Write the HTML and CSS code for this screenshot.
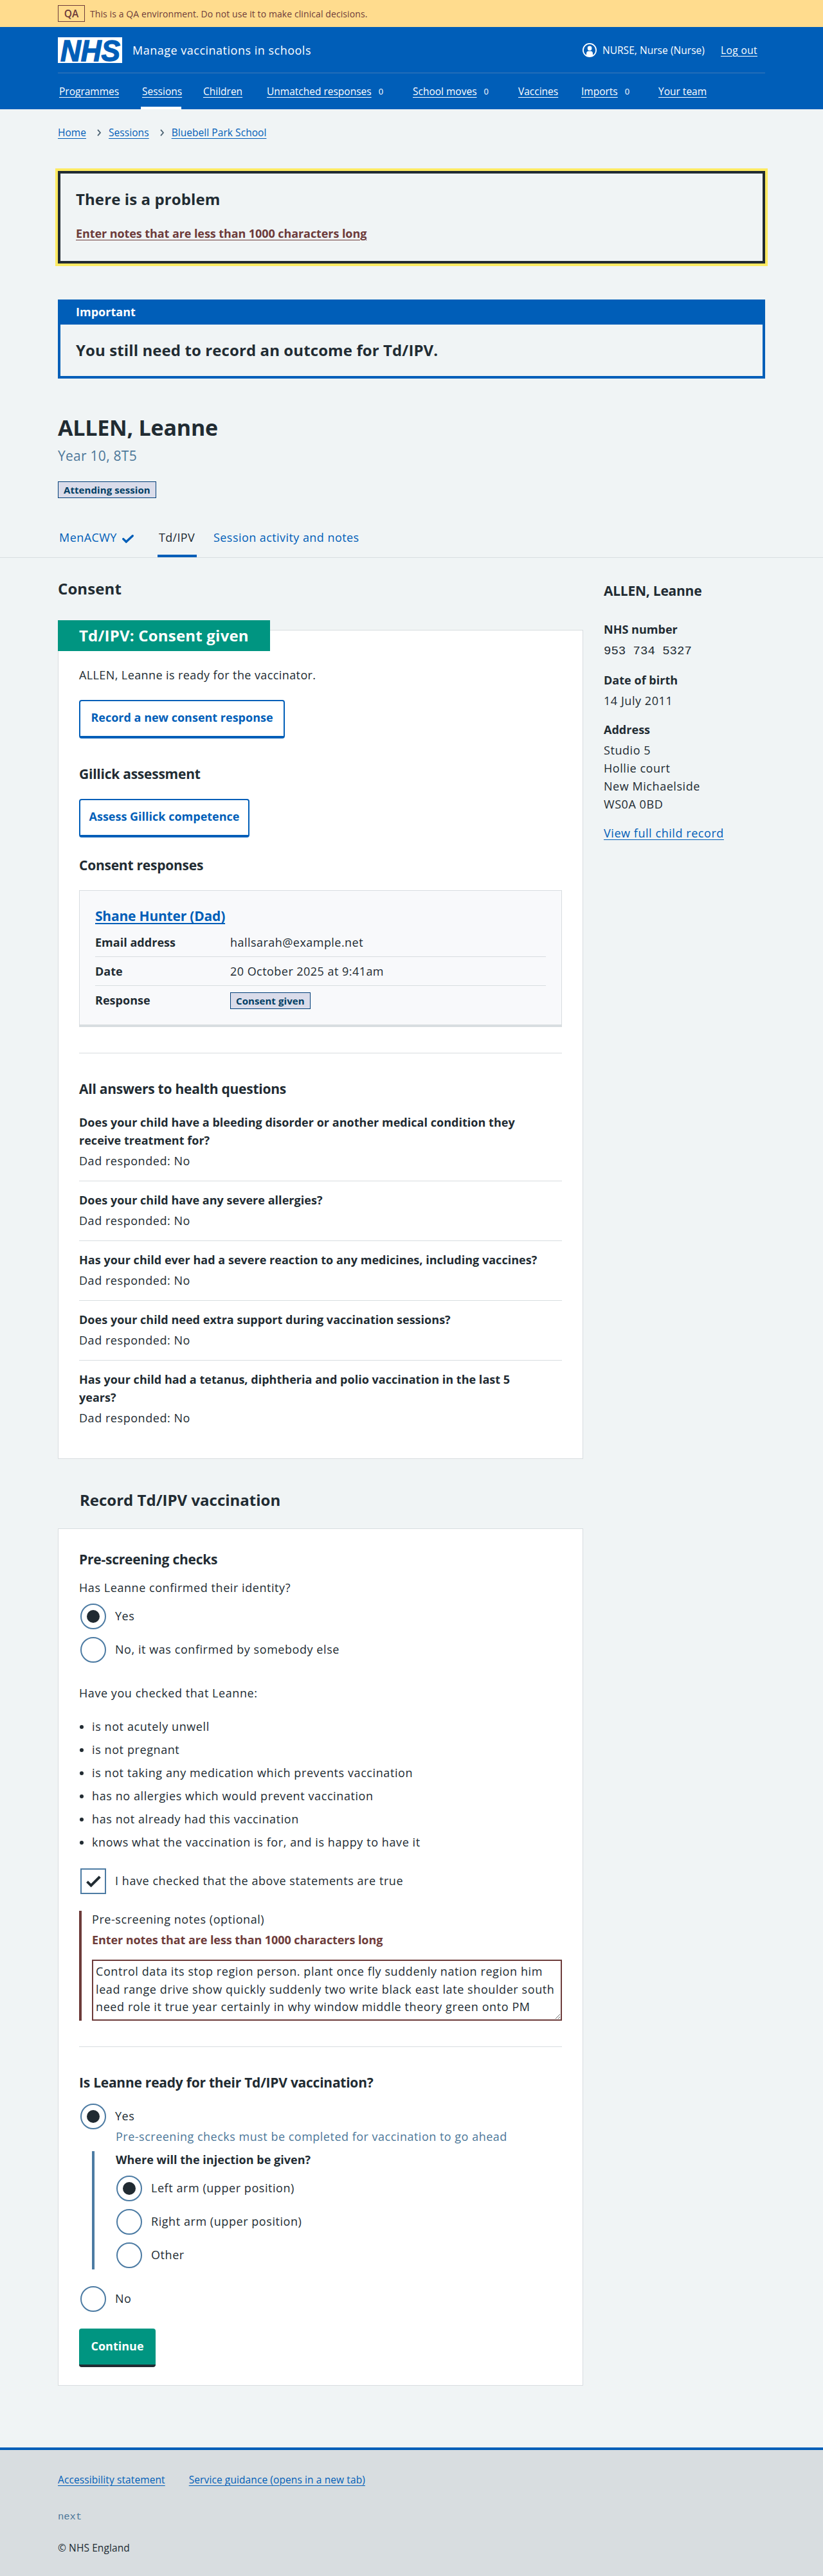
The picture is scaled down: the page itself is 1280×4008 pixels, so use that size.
FILE: index.html
```html
<!DOCTYPE html>
<html lang="en">
<head>
<meta charset="utf-8">
<title>ALLEN, Leanne – Manage vaccinations in schools</title>
<link rel="stylesheet" href="styles.css">
</head>
<body>
<div class="env-banner"><div class="container env-inner"><span class="env-tag">QA</span><span class="env-text">This is a QA environment. Do not use it to make clinical decisions.</span></div></div>
<header class="header">
  <div class="container">
    <div class="header-top">
      <svg class="logo" viewBox="0 0 100 40" role="img" aria-label="NHS"><path fill="#fff" d="M0 0h100v40H0z"/><text x="4" y="36.5" textLength="93" lengthAdjust="spacingAndGlyphs">NHS</text></svg>
      <span class="service">Manage vaccinations in schools</span>
      <div class="account">
        <svg width="22" height="22" viewBox="0 0 22 22"><circle cx="11" cy="11" r="10.1" fill="none" stroke="#fff" stroke-width="1.8"/><rect x="7.8" y="4.6" width="6.6" height="7" rx="3.1" fill="#fff"/><path fill="#fff" d="M6 19.3v-3.1c0-2.3 1.4-3.6 3.4-3.6h3.2c2 0 3.4 1.3 3.4 3.6v3.1A9.6 9.6 0 0 1 11 21a9.6 9.6 0 0 1-5-1.700z"/></svg>
        <span class="user">NURSE, Nurse (Nurse)</span>
        <a href="#">Log out</a>
      </div>
    </div>
    <nav class="nav">
      <div><a href="#">Programmes</a></div>
      <div class="current"><a href="#">Sessions</a></div>
      <div><a href="#">Children</a></div>
      <div><a href="#">Unmatched responses</a><span class="count">0</span></div>
      <div><a href="#">School moves</a><span class="count">0</span></div>
      <div><a href="#">Vaccines</a></div>
      <div><a href="#">Imports</a><span class="count">0</span></div>
      <div><a href="#">Your team</a></div>
    </nav>
  </div>
</header>

<div class="container">
  <nav class="breadcrumb">
    <a href="#">Home</a>
    <svg width="7" height="11" viewBox="0 0 7 11"><path d="M1 .8 5 5.500 1 10.200"/></svg>
    <a href="#">Sessions</a>
    <svg width="7" height="11" viewBox="0 0 7 11"><path d="M1 .8 5 5.500 1 10.200"/></svg>
    <a href="#">Bluebell Park School</a>
  </nav>
  <section class="error-summary">
    <h2 class="heading-m">There is a problem</h2>
    <a class="strong" href="#notes">Enter notes that are less than 1000 characters long</a>
  </section>
  <section class="notice">
    <div class="notice-title strong">Important</div>
    <div class="notice-body"><h2 class="heading-m">You still need to record an outcome for Td/IPV.</h2></div>
  </section>
  <h1 class="heading-l">ALLEN, Leanne</h1>
  <p class="caption">Year 10, 8T5</p>
  <p class="status"><span class="tag">Attending session</span></p>
</div>

<nav class="tabs">
  <div class="container tabs-inner">
    <a href="#">MenACWY<svg width="18" height="13" viewBox="0 0 18 13"><path d="M1.800 6.600 6.300 11 16.200 1.700"/></svg></a>
    <a href="#" class="current">Td/IPV</a>
    <a href="#">Session activity and notes</a>
  </div>
</nav>

<div class="container columns">
  <main class="main">
    <h2 class="heading-m">Consent</h2>
    <section class="card consent">
      <h3 class="heading-m card-label">Td/IPV: Consent given</h3>
      <p class="ready">ALLEN, Leanne is ready for the vaccinator.</p>
      <button class="button secondary record">Record a new consent response</button>
      <h4 class="heading-s gillick">Gillick assessment</h4>
      <button class="button secondary assess">Assess Gillick competence</button>
      <h4 class="heading-s responses">Consent responses</h4>
      <div class="response">
        <h5 class="heading-s"><a href="#">Shane Hunter (Dad)</a></h5>
        <dl>
          <div><dt>Email address</dt><dd>hallsarah@example.net</dd></div>
          <div><dt>Date</dt><dd>20 October 2025 at 9:41am</dd></div>
          <div><dt>Response</dt><dd><span class="tag">Consent given</span></dd></div>
        </dl>
      </div>
      <hr>
      <h4 class="heading-s after-rule">All answers to health questions</h4>
      <dl class="answers">
        <div><dt>Does your child have a bleeding disorder or another medical condition they<br>receive treatment for?</dt><dd>Dad responded: No</dd></div>
        <div><dt>Does your child have any severe allergies?</dt><dd>Dad responded: No</dd></div>
        <div><dt>Has your child ever had a severe reaction to any medicines, including vaccines?</dt><dd>Dad responded: No</dd></div>
        <div><dt>Does your child need extra support during vaccination sessions?</dt><dd>Dad responded: No</dd></div>
        <div><dt>Has your child had a tetanus, diphtheria and polio vaccination in the last 5<br>years?</dt><dd>Dad responded: No</dd></div>
      </dl>
    </section>

    <h2 class="heading-m record-title">Record Td/IPV vaccination</h2>
    <section class="card form">
      <h3 class="heading-s prescreen">Pre-screening checks</h3>
      <p class="legend">Has Leanne confirmed their identity?</p>
      <div class="choices">
        <label class="choice"><span class="radio on"></span>Yes</label>
        <label class="choice"><span class="radio"></span>No, it was confirmed by somebody else</label>
      </div>
      <p class="have-you">Have you checked that Leanne:</p>
      <ul class="bullets">
        <li>is not acutely unwell</li>
        <li>is not pregnant</li>
        <li>is not taking any medication which prevents vaccination</li>
        <li>has no allergies which would prevent vaccination</li>
        <li>has not already had this vaccination</li>
        <li>knows what the vaccination is for, and is happy to have it</li>
      </ul>
      <div class="choices confirm">
        <label class="choice"><span class="checkbox"><svg width="23" height="19" viewBox="0 0 23 19"><path d="M1.500 9.600 7.600 15.700 21.300 2"/></svg></span>I have checked that the above statements are true</label>
      </div>
      <div class="error-group">
        <label for="notes">Pre-screening notes (optional)</label>
        <p class="strong error-text">Enter notes that are less than 1000 characters long</p>
        <textarea id="notes" spellcheck="false">Control data its stop region person. plant once fly suddenly nation region him
lead range drive show quickly suddenly two write black east late shoulder south
need role it true year certainly in why window middle theory green onto PM</textarea>
      </div>
      <hr>
      <h3 class="heading-s after-rule">Is Leanne ready for their Td/IPV vaccination?</h3>
      <div class="choices ready-choices">
        <label class="choice"><span class="radio on"></span>Yes</label>
      </div>
      <p class="hint">Pre-screening checks must be completed for vaccination to go ahead</p>
      <div class="conditional">
        <p class="strong">Where will the injection be given?</p>
        <div class="choices">
          <label class="choice"><span class="radio on"></span>Left arm (upper position)</label>
          <label class="choice"><span class="radio"></span>Right arm (upper position)</label>
          <label class="choice"><span class="radio"></span>Other</label>
        </div>
      </div>
      <div class="choices no-choice">
        <label class="choice"><span class="radio"></span>No</label>
      </div>
      <button class="button primary">Continue</button>
    </section>
  </main>

  <aside class="sidebar">
    <h2 class="heading-s">ALLEN, Leanne</h2>
    <dl>
      <dt>NHS number</dt><dd class="nhs-number">953&nbsp;734&nbsp;5327</dd>
      <dt>Date of birth</dt><dd>14 July 2011</dd>
      <dt>Address</dt><dd>Studio 5<br>Hollie court<br>New Michaelside<br>WS0A 0BD</dd>
    </dl>
    <a href="#">View full child record</a>
  </aside>
</div>

<footer class="footer">
  <div class="container">
    <div class="footer-links"><a href="#">Accessibility statement</a><a href="#">Service guidance (opens in a new tab)</a></div>
    <p class="version">next</p>
    <p class="copyright">© NHS England</p>
  </div>
</footer>
</body>
</html>
```
FILE: styles.css
```css
* { box-sizing: border-box; }
body {
  margin: 0;
  background: #f0f4f5;
  color: #212b32;
  font: 400 18px/28px "Open Sans", "Noto Sans", sans-serif;
  letter-spacing: .56px;
}
h1, h2, h3, h4, h5, p, dl, dd, dt, ul { margin: 0; padding: 0; }
a { color: #005eb8; text-underline-offset: 3px; text-decoration-thickness: 1px; text-decoration-skip-ink: auto; }
svg { display: block; flex: none; }
hr { height: 1px; margin: 40px 0 0; border: 0; background: #d8dde0; }
.container { width: 1100px; margin: 0 auto; }
.strong, dt { font-weight: 700; letter-spacing: .03px; }
.heading-l { font-size: 34px; line-height: 44px; font-weight: 700; letter-spacing: -.21px; }
.heading-m { font-size: 24px; line-height: 32px; font-weight: 700; letter-spacing: .1px; }
.heading-s { font-size: 21px; line-height: 28px; font-weight: 700; letter-spacing: -.24px; }

.env-banner { height: 42px; background: #ffdc8e; color: #6d3b3a; }
.env-inner { display: flex; align-items: center; height: 42px; }
.env-tag { width: 42px; height: 26px; border: 1px solid #6d3b3a; text-align: center; font-size: 15.5px; line-height: 24px; font-weight: 600; letter-spacing: 0; }
.env-text { margin-left: 8px; padding-top: 2px; font-size: 14px; line-height: 24px; letter-spacing: .09px; }

.header { height: 128px; background: #005eb8; color: #fff; }
.header a { color: #fff; }
.header-top { display: flex; align-items: center; height: 72px; border-bottom: 1px solid #3f7ab8; }
.logo { width: 100px; height: 40px; overflow: visible; }
.logo text { font: italic 700 47px "Liberation Sans", sans-serif; letter-spacing: 0; fill: #005eb8; stroke: #005eb8; stroke-width: 1.4px; }
.service { margin-left: 16px; letter-spacing: .5px; }
.account { display: flex; align-items: center; margin-left: auto; margin-right: 12px; font-size: 15.5px; letter-spacing: .05px; }
.account a { letter-spacing: .4px; }
.user { margin: 0 25px 0 9px; }
.nav { display: grid; grid-template-columns: 97px 63px 67px 195px 132px 66px 88px 81px; column-gap: 32px; font-size: 15.5px; line-height: 24px; letter-spacing: 0; }
.nav div { display: flex; height: 56px; padding: 16px 2px 0; white-space: nowrap; }
.nav .current { border-bottom: 4px solid #fff; }
.count { margin-left: 11px; font-size: 13px; }

.breadcrumb { display: flex; align-items: center; height: 24px; margin-top: 24px; font-size: 15.5px; line-height: 24px; letter-spacing: .06px; }
.breadcrumb svg { margin: 1px 11px 0 17px; }
.breadcrumb path { fill: none; stroke: #4c6272; stroke-width: 1.8; }

.error-summary { height: 144px; margin-top: 48px; padding: 24px; border: 4px solid #212b32; outline: 4px solid #fdea62; }
.error-summary a { display: inline-block; margin-top: 23px; color: #6d3b3a; letter-spacing: -.08px; }
.notice { height: 123px; margin-top: 56px; border: 4px solid #005eb8; border-top: 0; }
.notice-title { height: 39px; padding: 5px 24px; background: #005eb8; color: #fff; }
.notice-body { padding: 24px; }
.heading-l { margin-top: 54px; }
.caption { margin-top: 8px; color: #4c7799; font-size: 21px; letter-spacing: .27px; }
.status { height: 26px; margin-top: 26px; display: flex; }
.tag { display: inline-block; height: 26px; padding: 0 8px; border: 1px solid #003d78; background: #dadcea; color: #003d63; font-size: 15px; line-height: 24px; font-weight: 700; letter-spacing: .08px; white-space: nowrap; }

.tabs { height: 46px; margin-top: 47px; border-bottom: 1px solid #d8dde0; }
.tabs-inner { display: grid; grid-template-columns: 131px 61px 231px; column-gap: 24px; height: 45px; }
.tabs a { display: flex; padding: 0 2px; text-decoration: none; letter-spacing: .44px; white-space: nowrap; }
.tabs a.current { border-bottom: 4px solid #005eb8; color: #212b32; letter-spacing: .3px; }
.tabs svg { margin: 10px 0 0 8px; }
.tabs path { fill: none; stroke: #005eb8; stroke-width: 3.4; stroke-linecap: round; }

.columns { display: grid; grid-template-columns: 816.66px 1fr; column-gap: 32.34px; }
.main { padding-top: 32px; }
.card { border: 1px solid #d8dde0; background: #fff; padding: 0 32px; }
.consent { height: 1290px; margin-top: 48px; }
.card-label { width: 330px; margin: -16px 0 0 -33px; padding: 8px 0 8px 33px; background: #009581; color: #fff; letter-spacing: .2px; }
.ready { margin-top: 23px; letter-spacing: .4px; }
.button { display: block; height: 60px; padding: 11px 0 17px; border: 2px solid #005eb8; border-bottom-width: 4px; border-radius: 4px; background: #fff; color: #005eb8; font: 700 18px/28px "Open Sans", sans-serif; letter-spacing: 0; white-space: nowrap; }
.record { width: 320px; margin-top: 25px; }
.gillick { margin-top: 41px; }
.assess { width: 265px; margin-top: 25px; }
.responses { margin-top: 29px; }
.response { height: 213px; margin-top: 25px; padding: 25px 24px 0; border: 1px solid #d8dde0; border-bottom-width: 4px; background: #f8f9fb; }
.response a { text-decoration-thickness: 2px; letter-spacing: -.2px; }
.response dl { margin-top: 5px; }
.response dl div { display: grid; grid-template-columns: 210px 1fr; height: 45px; padding-top: 8px; border-bottom: 1px solid #d8dde0; }
.response dl div:last-child { border: 0; }
.response dd { letter-spacing: .46px; }
.response .tag { margin-top: 1px; }
.after-rule { margin-top: 41px; }
.answers { margin-top: 24px; }
.answers div { padding: 15px 0 17px; border-bottom: 1px solid #d8dde0; }
.answers div:first-child { padding-top: 0; }
.answers div:last-child { border: 0; }
.answers dd { margin-top: 4px; letter-spacing: .55px; }

.record-title { margin-top: 48px; padding-left: 34px; letter-spacing: 0; }
.form { height: 1334px; margin-top: 28px; }
.prescreen { margin-top: 33px; }
.legend { margin: 16px 0 11px; }
.choices { display: grid; row-gap: 12px; }
.choice { display: flex; height: 40px; padding-left: 2px; line-height: 38px; }
.radio, .checkbox { display: grid; place-items: center; flex: none; width: 40px; height: 40px; margin-right: 14px; border: 2px solid #4c7ba3; background: #fff; }
.radio { border-radius: 50%; }
.radio.on::before { content: ""; width: 20px; height: 20px; border-radius: 50%; background: #212b32; }
.checkbox path { fill: none; stroke: #212b32; stroke-width: 4; }
.have-you { margin-top: 33px; }
.bullets { margin-top: 24px; padding-left: 20px; }
.bullets li { margin-bottom: 8px; letter-spacing: .59px; }
.confirm { margin-top: 27px; }
.error-group { height: 171px; margin-top: 26px; padding-left: 16px; border-left: 4px solid #6d3b3a; }
.error-group label { display: block; margin-top: -1px; }
.error-text { margin-top: 4px; color: #6d3b3a; letter-spacing: -.08px; }
textarea { display: block; width: 731px; height: 95px; margin-top: 17px; padding: 3px 4px; border: 2px solid #6d3b3a; border-radius: 0; background: #fff; color: #212b32; font: inherit; line-height: 27.700px; letter-spacing: .59px; overflow: hidden; white-space: pre; }
.error-group { display: flow-root; }
.ready-choices { margin-top: 19px; }
.hint { margin: -3px 0 0 57px; color: #4c7799; letter-spacing: .5px; }
.conditional { display: flow-root; height: 184px; margin: 9px 0 0 20px; padding-left: 33px; border-left: 4px solid #4c7ba3; }
.conditional > p { margin: -1px 0 11px; }
.conditional .choice { padding-left: 1px; }
.no-choice { margin-top: 26px; }
.primary { width: 119px; margin-top: 26px; border: 0; border-bottom: 4px solid #212b32; padding: 13px 0 15px; background: #009581; color: #fff; }

.sidebar { padding-top: 37px; }
.sidebar dl { margin-top: 32px; }
.sidebar dd { margin: 4px 0 17px; }
.sidebar .nhs-number { margin-top: 6px; font: 400 19px/28px "Liberation Mono", monospace; letter-spacing: 0; }

.footer { height: 200px; margin-top: 96px; padding-top: 34px; border-top: 4px solid #005eb8; background: #d8dde0; font-size: 15.5px; line-height: 24px; letter-spacing: .1px; }
.footer-links { display: flex; gap: 37px; }
.version { margin-top: 34px; color: #4c7799; font-family: "Liberation Mono", monospace; letter-spacing: 0; }
.copyright { margin-top: 24px; }
```
